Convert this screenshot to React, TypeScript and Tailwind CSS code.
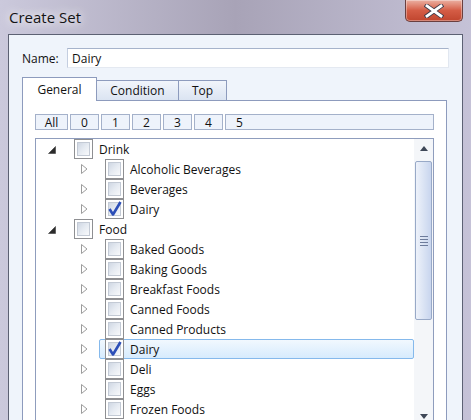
import React from 'react';

type TreeRow = {
  label: string;
  level: number;
  expanded?: boolean;
  checked?: boolean;
  selected?: boolean;
};

const rows: TreeRow[] = [
  { label: 'Drink', level: 0, expanded: true },
  { label: 'Alcoholic Beverages', level: 1 },
  { label: 'Beverages', level: 1 },
  { label: 'Dairy', level: 1, checked: true },
  { label: 'Food', level: 0, expanded: true },
  { label: 'Baked Goods', level: 1 },
  { label: 'Baking Goods', level: 1 },
  { label: 'Breakfast Foods', level: 1 },
  { label: 'Canned Foods', level: 1 },
  { label: 'Canned Products', level: 1 },
  { label: 'Dairy', level: 1, checked: true, selected: true },
  { label: 'Deli', level: 1 },
  { label: 'Eggs', level: 1 },
  { label: 'Frozen Foods', level: 1 },
];

const levels = ['All', '0', '1', '2', '3', '4'];

function Expander({ expanded }: { expanded?: boolean }) {
  if (expanded) {
    return (
      <svg width="8" height="8" viewBox="0 0 8 8" className="mt-[1px]">
        <polygon points="7.5,0.5 7.5,7.5 0.5,7.5" fill="#2b2b2b" stroke="#3c3c3c" strokeWidth="0.6" />
      </svg>
    );
  }
  return (
    <svg width="7" height="10" viewBox="0 0 7 10" className="ml-[2px]">
      <path d="M0.5 0.5 L6 5 L0.5 9.5 Z" fill="#ffffff" stroke="#9c9c9c" strokeWidth="1" />
    </svg>
  );
}

function CheckBox({ checked }: { checked?: boolean }) {
  return (
    <div className="relative h-[20px] w-[19px] shrink-0 border border-[#8e8f92] bg-white p-[2px]">
      <div className="h-full w-full border border-[#c3cad5] bg-linear-to-br from-[#cfd7e3] via-[#e6ebf2] to-[#f8f9fb]" />
      {checked && (
        <svg width="19" height="20" viewBox="0 0 19 20" className="absolute left-[-1px] top-[-1px]">
          <path d="M4.5 10 L8 15.5 L15.5 3" fill="none" stroke="#2d4fb8" strokeWidth="2.6" strokeLinejoin="round" />
        </svg>
      )}
    </div>
  );
}

function Row({ row }: { row: TreeRow }) {
  return (
    <div className={`flex h-[20px] shrink-0 items-center ${row.level === 0 ? 'pl-[12px]' : 'pl-[43px]'}`}>
      <div className="flex w-[20px] shrink-0 items-center">
        <Expander expanded={row.expanded} />
      </div>
      <div
        className={
          row.selected
            ? 'flex h-[20px] flex-1 items-center rounded-[2px] border border-[#85b9ec] bg-linear-to-b from-[#f1f8fe] to-[#d6ebfd] pl-[5px]'
            : 'flex h-[20px] items-center pl-[6px]'
        }
      >
        <CheckBox checked={row.checked} />
        <span className="ml-[6px] mt-[2px] whitespace-nowrap text-[12px] text-[#111111]">{row.label}</span>
      </div>
    </div>
  );
}

function ScrollArrow({ up }: { up?: boolean }) {
  return (
    <div className="flex h-[18px] shrink-0 items-center justify-center">
      <svg width="8" height="5" viewBox="0 0 8 5">
        {up ? <polygon points="4,0 8,5 0,5" fill="#3e4757" /> : <polygon points="0,0 8,0 4,5" fill="#3e4757" />}
      </svg>
    </div>
  );
}

export default function App() {
  return (
    <div className="flex h-[420px] w-[471px] flex-col overflow-hidden bg-linear-to-r from-[#cbc9dc] via-[#a8a3b7] to-[#c5c2d7] font-['Open_Sans',sans-serif]">
      <div className="flex h-[34px] shrink-0 items-start justify-between">
        <div className="pl-[9px] pt-[6px] text-[15px] text-[#141414] [text-shadow:0_0_8px_#ffffff,0_0_14px_#ffffff]">
          Create Set
        </div>
        <div className="mr-[8px] flex h-[22px] w-[58px] items-center justify-center rounded-b-[5px] border border-t-0 border-[#6a3f3f] bg-linear-to-b from-[#eab0a2] via-[#d45c45] to-[#c0452e] shadow-[inset_0_0_0_1px_rgba(255,255,255,0.35)]">
          <svg width="20" height="14" viewBox="0 0 20 14">
            <path d="M3 2 L17 12 M17 2 L3 12" stroke="#3b3a48" strokeWidth="4.6" strokeLinecap="square" />
            <path d="M3 2 L17 12 M17 2 L3 12" stroke="#ffffff" strokeWidth="2.8" strokeLinecap="square" />
          </svg>
        </div>
      </div>

      <div className="flex-1 px-[8px]">
        <div className="h-[430px] border border-[#5c6173] bg-[#eff4fb] pl-[13px] pr-[13px] pt-[13px]">
          <div className="flex h-[20px] items-center">
            <span className="mt-[2px] w-[45px] shrink-0 text-[12px] text-[#111111]">Name:</span>
            <div className="flex h-[20px] flex-1 items-center border border-t-[#a6b3cb] border-l-[#c4cee0] border-r-[#e1e7f0] border-b-[#e4e9f1] bg-white pl-[4px] pt-[2px] text-[12px] text-[#111111]">
              Dairy
            </div>
          </div>

          <div className="mr-[2px] mt-[9px]">
            <div className="flex h-[23px] items-end">
              <div className="relative z-10 -mb-px flex h-[24px] w-[75px] items-center justify-center border border-b-0 border-[#8d9bbd] bg-white text-[12px] text-[#111111]">
                General
              </div>
              <div className="flex h-[20px] w-[82px] items-center justify-center border-r border-t border-[#8d9bbd] bg-linear-to-b from-[#f1f5fb] to-[#dbe4f2] pt-[1px] text-[12px] text-[#111111]">
                Condition
              </div>
              <div className="flex h-[20px] w-[48px] items-center justify-center border-r border-t border-[#8d9bbd] bg-linear-to-b from-[#f1f5fb] to-[#dbe4f2] pt-[1px] text-[12px] text-[#111111]">
                Top
              </div>
            </div>

            <div className="border border-[#8d9bbd] bg-white px-[12px] pt-[13px]">
              <div className="flex h-[16px] gap-[2px]">
                {levels.map((l) => (
                  <div
                    key={l}
                    className={`flex h-[16px] shrink-0 items-center justify-center border border-[#a4b1ca] bg-[#eef3fb] pt-[1px] text-[12px] leading-none text-[#111111] ${l === 'All' ? 'w-[33px]' : 'w-[29px]'}`}
                  >
                    {l}
                  </div>
                ))}
                <div className="flex h-[16px] flex-1 items-center border border-[#a4b1ca] bg-[#eef3fb] pt-[1px] text-[12px] leading-none text-[#111111]">
                  <span className="w-[27px] text-center">5</span>
                </div>
              </div>

              <div className="mt-[8px] flex h-[288px] border border-[#8f9dbd] bg-white">
                <div className="flex flex-1 flex-col overflow-hidden">
                  {rows.map((r, i) => (
                    <Row key={i} row={r} />
                  ))}
                </div>
                <div className="flex w-[19px] shrink-0 flex-col bg-[#f4f6f9]">
                  <ScrollArrow up />
                  <div className="mx-[1px] mt-[4px] flex h-[159px] items-center justify-center rounded-[2px] border border-[#98a9c7] bg-linear-to-r from-[#eef2fa] via-[#dbe4f4] to-[#c8d5ee]">
                    <div className="flex flex-col gap-[2px]">
                      <div className="h-px w-[8px] bg-[#6d7c9c]" />
                      <div className="h-px w-[8px] bg-[#6d7c9c]" />
                      <div className="h-px w-[8px] bg-[#6d7c9c]" />
                      <div className="h-px w-[8px] bg-[#6d7c9c]" />
                    </div>
                  </div>
                  <div className="mt-auto">
                    <ScrollArrow />
                  </div>
                </div>
              </div>
            </div>
          </div>
        </div>
      </div>
    </div>
  );
}
